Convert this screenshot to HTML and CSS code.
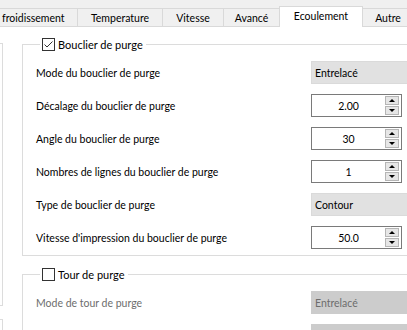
FILE: index.html
```html
<!DOCTYPE html>
<html lang="fr">
    <head>
        <title>Ecoulement</title>
        <meta charset="utf-8">
        <link rel="stylesheet" href="styles.css">
    </head>
    <body>
        <div class="tabs">
            <div class="tab t1">froidissement</div>
            <div class="tab t2">Temperature</div>
            <div class="tab t3">Vitesse</div>
            <div class="tab t4">Avancé</div>
            <div class="tab t5 active">Ecoulement</div>
            <div class="tab t6">Autre</div>
        </div>

        <div class="page">
            <div class="side">
                <div class="side-box"></div>
                <div class="side-box2"></div>
            </div>

            <div class="groups">
                <fieldset class="group">
                    <legend>
                        <span class="check"><svg width="11" height="11" viewBox="0 0 11 11"><path d="M1.5 5.5 L4 8 L9.5 2.5" fill="none" stroke="#333" stroke-width="1"/></svg></span>
                        Bouclier de purge
                    </legend>
                    <div class="row">
                        <span class="label">Mode du bouclier de purge</span>
                        <div class="combo">Entrelacé</div>
                    </div>
                    <div class="row">
                        <span class="label">Décalage du bouclier de purge</span>
                        <div class="spin"><span class="value">2.00</span><span class="arrows"><span class="up"></span><span class="down"></span></span></div>
                    </div>
                    <div class="row">
                        <span class="label">Angle du bouclier de purge</span>
                        <div class="spin"><span class="value">30</span><span class="arrows"><span class="up"></span><span class="down"></span></span></div>
                    </div>
                    <div class="row">
                        <span class="label">Nombres de lignes du bouclier de purge</span>
                        <div class="spin"><span class="value">1</span><span class="arrows"><span class="up"></span><span class="down"></span></span></div>
                    </div>
                    <div class="row">
                        <span class="label">Type de bouclier de purge</span>
                        <div class="combo">Contour</div>
                    </div>
                    <div class="row">
                        <span class="label">Vitesse d'impression du bouclier de purge</span>
                        <div class="spin"><span class="value">50.0</span><span class="arrows"><span class="up"></span><span class="down"></span></span></div>
                    </div>
                </fieldset>

                <fieldset class="group off">
                    <legend>
                        <span class="check"></span>
                        Tour de purge
                    </legend>
                    <div class="row">
                        <span class="label">Mode de tour de purge</span>
                        <div class="combo">Entrelacé</div>
                    </div>
                    <div class="row">
                        <span class="label"></span>
                        <div class="combo"></div>
                    </div>
                </fieldset>
            </div>
        </div>
    </body>
</html>
```

FILE: styles.css
```css
* {
    box-sizing: border-box;
}
html, body {
    margin: 0;
    width: 407px;
    height: 330px;
    overflow: hidden;
    background-color: #fff;
    font-family: 'Lato', sans-serif;
    font-size: 10.5px;
    color: #000;
}

.tabs {
    display: flex;
    align-items: flex-end;
    height: 27px;
    margin-left: -10px;
    background-color: #f0f0f0;
    border-bottom: 1px solid #d9d9d9;
}
.tab {
    flex: none;
    height: 18px;
    margin-right: -1px;
    border: 1px solid #d9d9d9;
    border-bottom: 0;
    background-color: #f0f0f0;
    display: flex;
    align-items: center;
    justify-content: center;
    white-space: nowrap;
}
.tab.active {
    position: relative;
    height: 21px;
    margin-bottom: -1px;
    padding-bottom: 2px;
    background-color: #fff;
}
.t1 { width: 88px; padding-left: 11px; justify-content: flex-start; }
.t2 { width: 86px; }
.t3 { width: 62px; }
.t4 { width: 57px; }
.t5 { width: 84px; }
.t6 { width: 52px; }

.page {
    display: flex;
}
.side {
    flex: none;
    width: 3px;
}
.side-box {
    height: 263px;
    margin-top: 16px;
    border: 1px solid #dcdcdc;
    border-left: 0;
}
.side-box2 {
    height: 40px;
    margin-top: 13px;
    border-top: 1px solid #dcdcdc;
    border-right: 1px solid #dcdcdc;
}

.groups {
    flex: none;
    width: 440px;
    margin-left: 19px;
    padding-top: 10px;
}
.group {
    margin: 0 0 11px 0;
    padding: 10px 0 6px 13px;
    border: 1px solid #dcdcdc;
    min-width: 0;
}
.group legend {
    display: flex;
    align-items: center;
    gap: 3px;
    margin-left: 4px;
    padding: 0 3px 0 2px;
    height: 14px;
    font-size: 11px;
}
.check {
    width: 13px;
    height: 13px;
    border: 1px solid #333;
    background-color: #fff;
    display: flex;
}

.row {
    display: flex;
    align-items: center;
    height: 23px;
}
.row + .row {
    margin-top: 10px;
}
.label {
    flex: none;
    width: 275px;
    white-space: nowrap;
}
.combo {
    width: 120px;
    height: 23px;
    padding-left: 3px;
    display: flex;
    align-items: center;
    background-color: #e1e1e1;
    border: 1px solid #dadada;
}
.spin {
    width: 91px;
    height: 23px;
    display: flex;
    align-items: center;
    border: 1px solid #7a7a7a;
    background-color: #fff;
}
.spin .value {
    flex: 1;
    text-align: center;
}
.arrows {
    width: 14px;
    height: 19px;
    margin-right: 2px;
    display: flex;
    flex-direction: column;
    gap: 1px;
}
.arrows span {
    flex: 1;
    background-color: #e6e6e6;
    border: 1px solid #b5b5b5;
    display: flex;
    align-items: center;
    justify-content: center;
}
.arrows span::after {
    content: "";
    border-left: 3px solid transparent;
    border-right: 3px solid transparent;
}
.arrows .up::after {
    border-bottom: 3px solid #000;
}
.arrows .down::after {
    border-top: 3px solid #000;
}

.group.off .label {
    color: #6d6d6d;
}
.group.off .combo {
    background-color: #cccccc;
    border-color: #cccccc;
    color: #6d6d6d;
}
```
